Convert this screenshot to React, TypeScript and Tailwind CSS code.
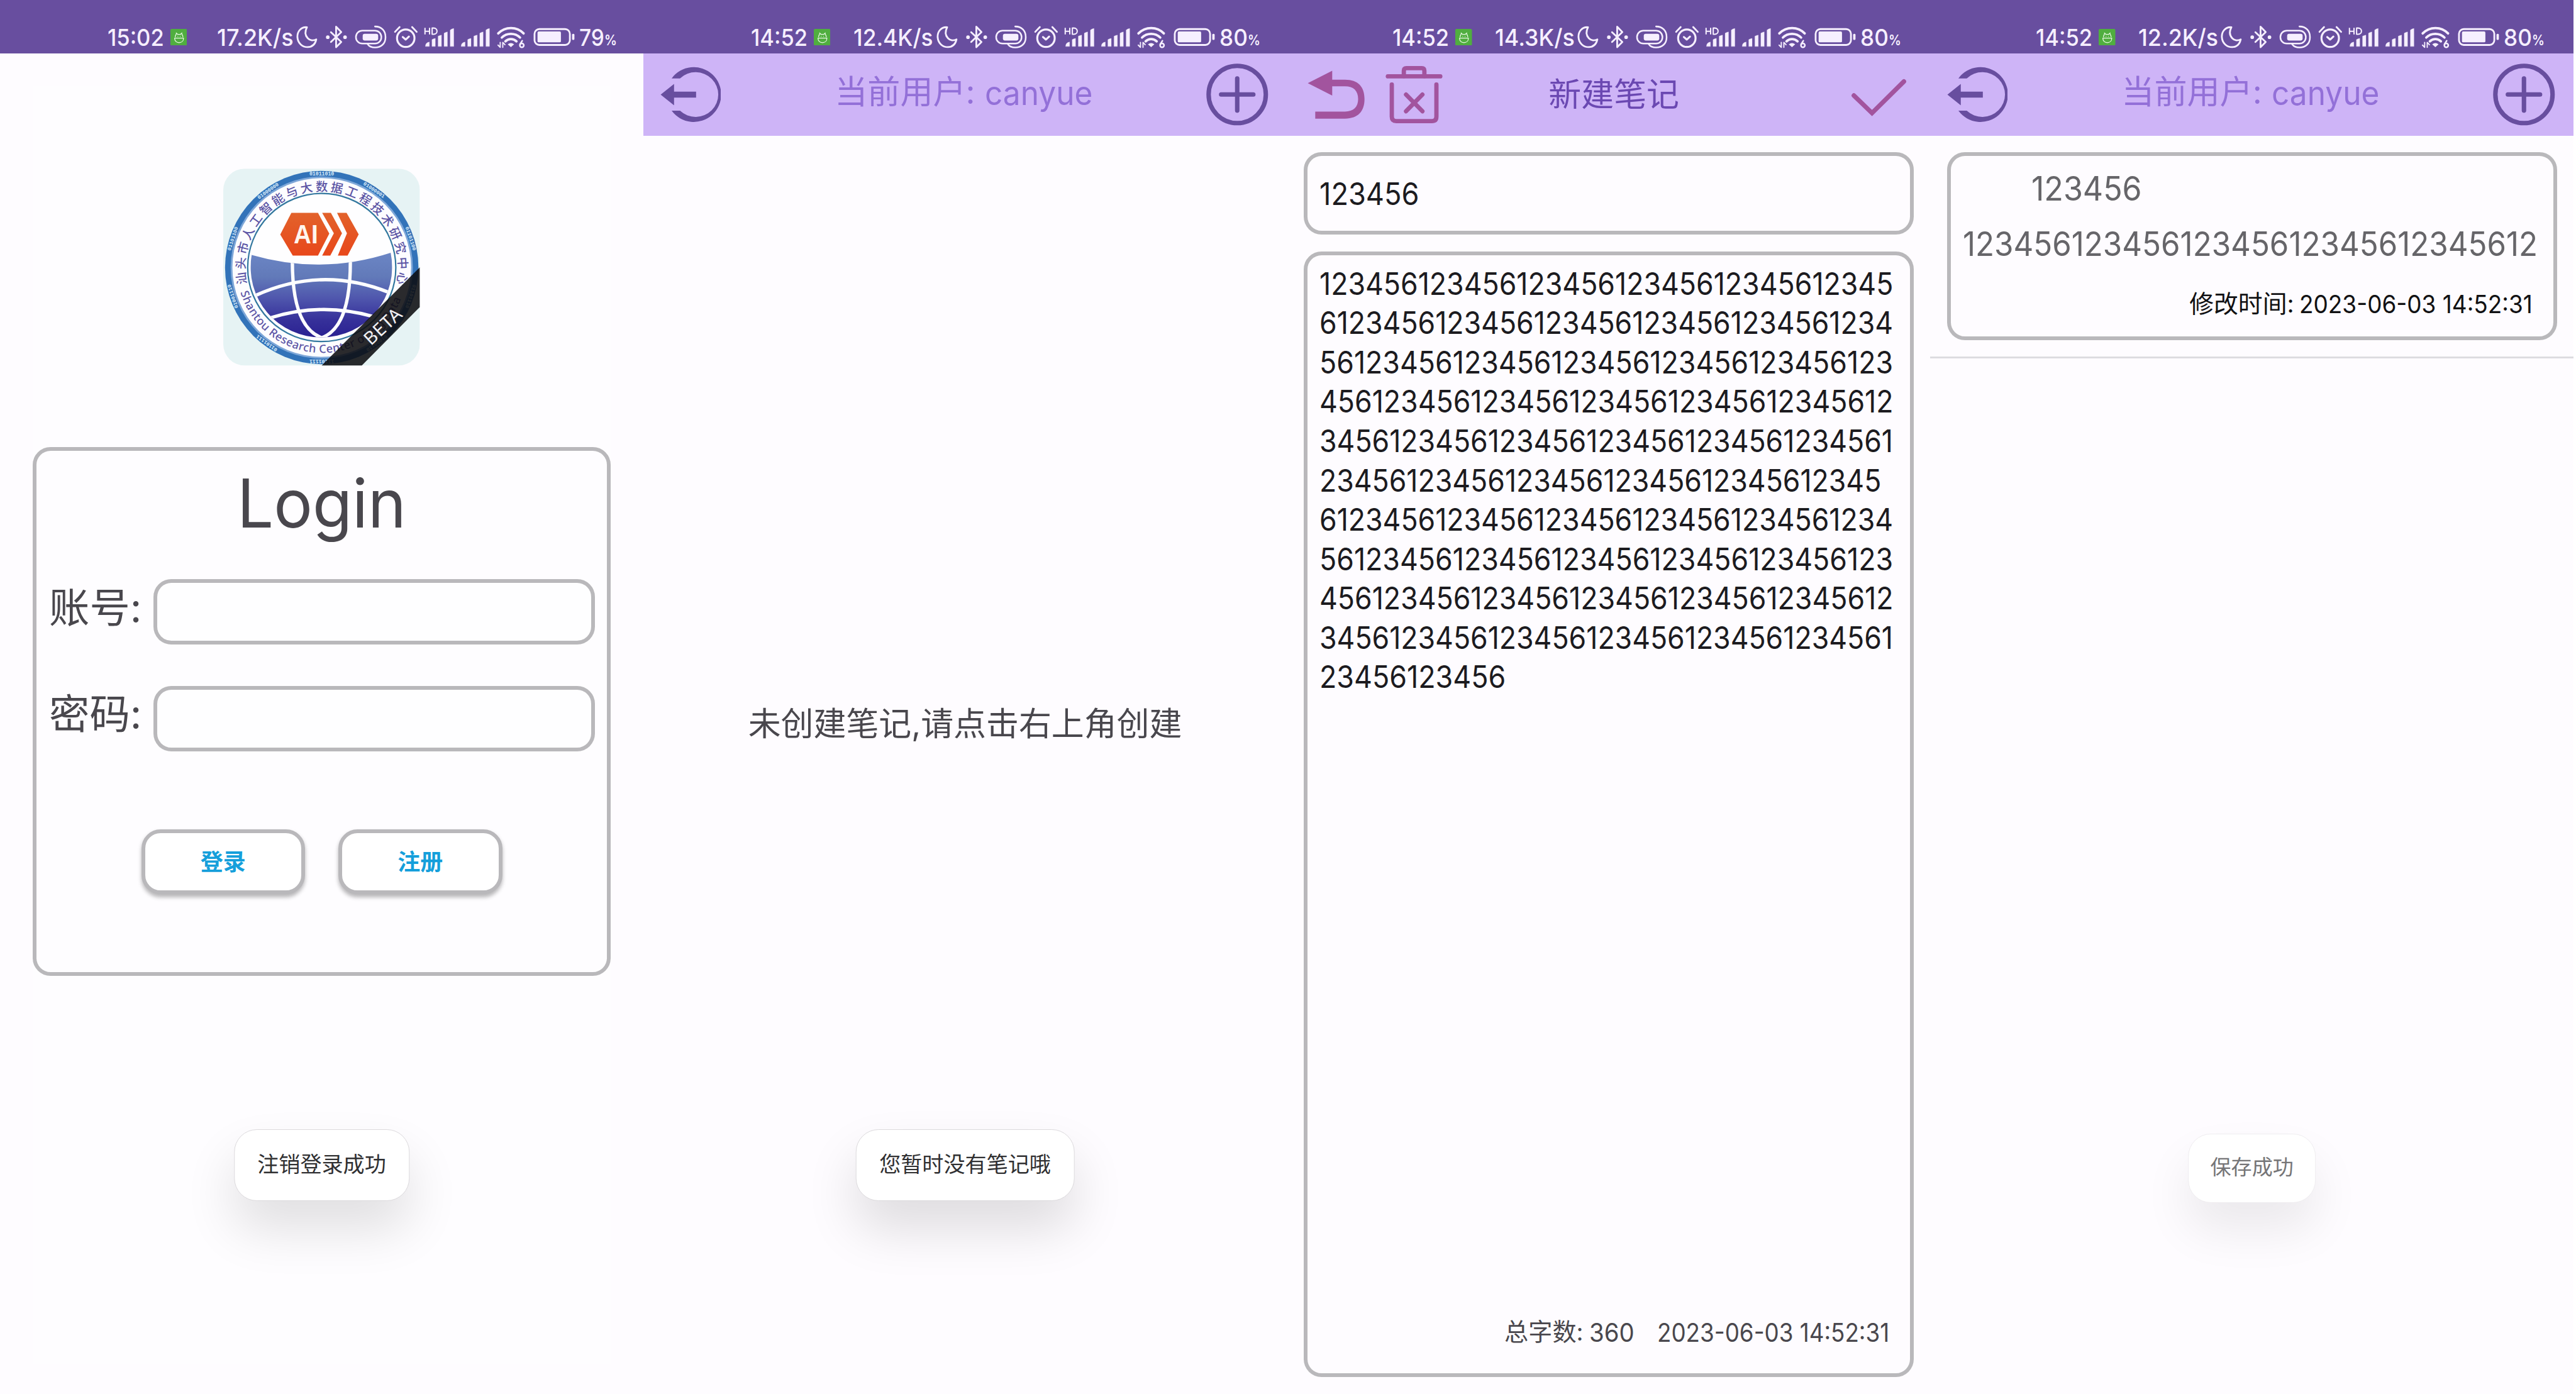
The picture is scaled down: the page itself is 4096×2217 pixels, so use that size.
import { useLayoutEffect, useRef, useState } from "react";
import type { ReactNode } from "react";

/** Horizontally condenses a single line of Latin text to the width given in `className`. */
function Fit({ className, children }: { className: string; children: ReactNode }) {
  const outer = useRef<HTMLSpanElement>(null);
  const inner = useRef<HTMLSpanElement>(null);
  const [scale, setScale] = useState(1);
  useLayoutEffect(() => {
    if (outer.current && inner.current) {
      setScale(outer.current.offsetWidth / inner.current.offsetWidth);
    }
  }, [children]);
  return (
    <span ref={outer} className={`block shrink-0 whitespace-nowrap ${className}`}>
      <span ref={inner} className="inline-block origin-left" style={{ transform: `scaleX(${scale})` }}>
        {children}
      </span>
    </span>
  );
}

function SignalBars({ x }: { x: number }) {
  return (
    <path
      transform={`translate(${x} 0)`}
      d="M0 143 Q0 124 20 121 V143 Z M33 143 V109 Q40 104 50 103 V143 Z M64 143 V92 Q72 87 81 86 V143 Z M94 143 V77 Q102 71 111 70 V143 Z M125 143 V61 Q133 54 143 53 V143 Z"
      fill="#f6efff"
    />
  );
}

function StatusIcons({ level }: { level: number }) {
  const c = "#f6efff";
  return (
    <svg viewBox="49 30 1405 132" className="h-[44px] w-[468px] shrink-0" fill="none" stroke={c} strokeLinecap="round" strokeLinejoin="round">
      <path d="M103 47 C72 44 54 70 55 96 C57 128 80 147 107 147 C130 146 145 132 150 108 C136 116 118 114 107 102 C94 88 92 68 103 47 Z" strokeWidth="9" />
      <path d="M224 72 L276 121 L250 147 V44 L276 71 L224 121" strokeWidth="9" />
      <circle cx="208" cy="97" r="9" fill={c} stroke="none" />
      <circle cx="295" cy="97" r="9" fill={c} stroke="none" />
      <rect x="350" y="64" width="128" height="65" rx="32" strokeWidth="8" />
      <rect x="384" y="80" width="78" height="34" rx="10" fill={c} stroke="none" />
      <path d="M446 43 C480 43 499 66 499 97 C499 130 476 149 446 149 C430 149 416 142 409 132" strokeWidth="8" />
      <circle cx="601" cy="102" r="44" strokeWidth="10" />
      <path d="M586 96 L601 109 L617 94" strokeWidth="10" />
      <path d="M547 70 L570 46 M656 70 L633 46" strokeWidth="9" />
      <path d="M698 50 V83 M721 50 V83 M698 67 H721 M734 51 V82 H742 C764 82 764 51 742 51 Z" strokeWidth="6.5" strokeLinecap="butt" />
      <SignalBars x={700} />
      <SignalBars x={880} />
      <path d="M1067 78 C1103 42 1160 42 1195 78" strokeWidth="12" />
      <path d="M1085 99 C1110 74 1152 74 1177 99" strokeWidth="12" />
      <path d="M1103 118 C1120 103 1142 103 1159 118" strokeWidth="12" />
      <path d="M1131 147 L1115 133 Q1131 121 1147 133 Z" fill={c} stroke="none" />
      <path d="M1077 123 V148 L1066 137 M1090 148 V123 L1101 135" strokeWidth="6" />
      <circle cx="1186" cy="138" r="10" strokeWidth="8" />
      <path d="M1177 132 L1188 115" strokeWidth="8" />
      <rect x="1250" y="56" width="178" height="80" rx="24" strokeWidth="9" />
      <rect x="1265" y="68" width={level} height="55" rx="6" fill={c} stroke="none" />
      <rect x="1439" y="80" width="12" height="31" rx="5" fill={c} stroke="none" />
    </svg>
  );
}

function StatusBar({ time, speed, battery, pad }: { time: string; speed: string; battery: string; pad: string }) {
  return (
    <div className={`flex h-[90px] shrink-0 items-center bg-[#684e9f] pt-[35px] text-[39.5px] leading-[54px] font-medium text-[#f6efff] ${pad}`}>
      <Fit className="w-[95px]">{time}</Fit>
      <svg viewBox="0 0 28 28" className="ml-[11px] h-[28px] w-[28px] shrink-0" fill="none" stroke="#e9f8e4" strokeWidth="1.3">
        <rect width="28" height="28" rx="2" fill="#50ae3f" stroke="none" />
        <path d="M8 14 C8 10 10 10 10 7 L12 9 H17 L19 7 C19 10 21 10 21 14 M7 15.500 H22 C22 20 19 23 14.500 23 C10 23 7 20 7 15.500 Z" />
        <path d="M12 12.500 H13 M16 12.500 H17" />
      </svg>
      <span className="grow" />
      <Fit className={battery === "79" ? "w-[128px]" : "w-[134px]"}>{speed}</Fit>
      <span className="w-[5px]" />
      <StatusIcons level={118} />
      <span className="w-[7px]" />
      <Fit className={battery === "79" ? "w-[42px]" : "w-[47px]"}>{battery}</Fit>
      <span className="mt-[9px]">
        <Fit className="w-[21px] text-[24px] font-semibold">%</Fit>
      </span>
    </div>
  );
}

const RING = "汕头市人工智能与大数据工程技术研究中心".split("");
const BITS: [number, string][] = [
  [0, "01011010"],
  [34, "01000001"],
  [72, "01101100"],
  [108, "01101110"],
  [144, "01000110"],
  [180, "11101111"],
  [216, "01101111"],
  [252, "01001110"],
  [288, "01101100"],
  [325, "01000000"],
];

function Logo() {
  return (
    <svg viewBox="45 38 990 992" className="h-[331px] w-[330px]">
      <defs>
        <clipPath id="tile">
          <rect x="45" y="38" width="990" height="992" rx="108" />
        </clipPath>
        <clipPath id="globe">
          <path d="M188 473 Q541 575 888 462 A354 354 0 0 1 541 888 A354 354 0 0 1 188 473 Z" />
        </clipPath>
        <linearGradient id="sea" x1="0" y1="0" x2="0" y2="1">
          <stop offset="0" stopColor="#6c87c6" />
          <stop offset="0.3" stopColor="#627ab9" />
          <stop offset="0.55" stopColor="#4f56ad" />
          <stop offset="0.8" stopColor="#36309a" />
          <stop offset="1" stopColor="#2a2191" />
        </linearGradient>
        <linearGradient id="ember" x1="0" y1="0" x2="0" y2="1">
          <stop offset="0" stopColor="#e2622b" />
          <stop offset="1" stopColor="#e8481b" />
        </linearGradient>
        <path id="rim" d="M131.700 661 A428 428 0 0 0 961 624" />
      </defs>
      <g clipPath="url(#tile)">
        <rect x="45" y="38" width="990" height="992" fill="#e6f3f4" />
        <circle cx="541" cy="536" r="487" fill="#3273b9" />
        <circle cx="541" cy="536" r="459" fill="#7ea7d8" />
        <circle cx="541" cy="536" r="450" fill="#fdfdff" />
        <circle cx="541" cy="536" r="373" fill="#fefeff" stroke="#33789f" strokeWidth="7" />
        {BITS.map(([deg, bits]) => (
          <text key={deg} transform={`rotate(${deg} 541 536)`} x="541" y="73" textAnchor="middle" fontSize="26" fill="#dcecfa" className="font-['Liberation_Mono'] font-bold">
            {bits}
          </text>
        ))}
        {RING.map((ch, i) => (
          <text key={i} transform={`rotate(${(i - 9) * 10.86} 541 536)`} x="541" y="150" textAnchor="middle" fontSize="61" fill="#5c55a5" className="font-['Noto_Sans_CJK_SC'] font-medium">
            {ch}
          </text>
        ))}
        <text fontSize="57" fill="#5c55a5" className="font-['Noto_Sans'] font-medium">
          <textPath href="#rim" textLength="1060">Shantou Research Center of Big Data</textPath>
        </text>
        <g fill="url(#ember)">
          <path d="M332 370 L388 261 H522 L579 365 L522 476 H395 Z" />
          <path d="M543 261 H587 L643 364 L584 476 H543 L602 364 Z" />
          <path d="M618 261 H666 L727 369 L671 476 H622 L668 364 Z" />
        </g>
        <text x="400" y="415" textLength="122" lengthAdjust="spacingAndGlyphs" fontSize="132" fill="#fff5ee" className="font-['Liberation_Sans'] font-bold">
          AI
        </text>
        <g clipPath="url(#globe)">
          <rect x="180" y="450" width="720" height="440" fill="url(#sea)" />
          <g fill="none" stroke="#fdfdff" strokeWidth="17">
            <path d="M393 500 C392 700 430 850 541 890 C650 850 686 700 685 500" />
            <path d="M205 678 Q541 524 885 664" />
            <path d="M285 789 Q541 709 805 784" />
          </g>
        </g>
        <path d="M1035 535 V735 L742 1030 H540 Z" fill="#0c0d10" fillOpacity="0.88" />
        <text transform="translate(848 830) rotate(-43)" x="0" y="34" textAnchor="middle" fontSize="92" letterSpacing="3" fill="#f1f1f4" className="font-['Noto_Sans']">
          BETA
        </text>
      </g>
    </svg>
  );
}

function Toast({ text, className }: { text: string; className: string }) {
  return (
    <div className={`absolute left-[540px] flex -translate-x-1/2 items-center justify-center rounded-[38px] border border-[#dcdadd] bg-white whitespace-nowrap ${className}`}>
      {text}
    </div>
  );
}

function Field({ label, className }: { label: string; className: string }) {
  return (
    <div className={`flex h-[110px] items-center pr-[20px] pl-[21px] ${className}`}>
      <span className="-mt-[13px] w-[175px] text-[68px] leading-[110px] text-[#49474d]">{label}</span>
      <div className="h-full grow rounded-[30px] border-[6.4px] border-[#b9b8bb] bg-[#fefeff]" />
    </div>
  );
}

function LoginButton({ children }: { children: string }) {
  return (
    <button className="h-[109px] w-[275px] rounded-[32px] border-[6.4px] border-[#b9b8bb] bg-white pt-[1px] text-[38px] font-bold text-[#159fdb] shadow-[0_5px_7px_rgba(0,0,0,0.28)]">
      {children}
    </button>
  );
}

function LoginScreen() {
  return (
    <section className="relative flex h-full w-[1080px] shrink-0 flex-col">
      <StatusBar time="15:02" speed="17.2K/s" battery="79" pad="pl-[180px] pr-[45px]" />
      <div className="mx-[55px] mt-[54px] flex h-[2147px] flex-col items-center bg-[#fefdff] pt-[139px]">
        <Logo />
        <div className="mt-[137px] h-[887px] w-full rounded-[30px] border-[6.4px] border-[#b9b8bb] pt-[28px]">
          <h1 className="flex justify-center text-[112.500px] leading-[120px] text-[#49474d]">
            <Fit className="w-[284px]">Login</Fit>
          </h1>
          <Field label="账号:" className="mt-[67px]" />
          <Field label="密码:" className="mt-[69px]" />
          <div className="mt-[131px] flex justify-center gap-[56px]">
            <LoginButton>登录</LoginButton>
            <LoginButton>注册</LoginButton>
          </div>
        </div>
      </div>
      <Toast text="注销登录成功" className="top-[1896px] h-[120px] w-[295px] pb-[2px] text-[36px] text-[#303032] shadow-[0_47px_85px_rgba(0,0,0,0.12)]" />
    </section>
  );
}

function HomeBar() {
  return (
    <header className="flex h-[138px] shrink-0 items-center justify-between bg-[#ceb4f7] pr-[31px] pl-[28px]">
      <svg viewBox="28 112 102 94" className="h-[94px] w-[102px] shrink-0" fill="#684e9f">
        <path d="M47 131.700 A46 46 0 1 1 47 186 H61 A38 37.500 0 1 0 61 131.700 Z" />
        <path d="M28.500 159 L51 141 V154 H88 V164 H51 V177 Z" />
      </svg>
      <h1 className="flex items-center text-[55px] leading-[80px] text-[#9370d8]">
        <span className="-mt-[7px] whitespace-nowrap">当前用户:</span>
        <span className="-mt-[4px] ml-[16px]">
          <Fit className="w-[181px]">canyue</Fit>
        </span>
      </h1>
      <svg viewBox="945 107 104 104" className="h-[104px] w-[104px] shrink-0" fill="none" stroke="#684e9f" strokeWidth="7.500" strokeLinecap="round">
        <circle cx="997" cy="159" r="48" />
        <path d="M970 159 H1024 M997 132 V186" />
      </svg>
    </header>
  );
}

function EmptyScreen() {
  return (
    <section className="relative flex h-full w-[1080px] shrink-0 flex-col">
      <StatusBar time="14:52" speed="12.4K/s" battery="80" pad="pl-[180px] pr-[45px]" />
      <HomeBar />
      <p className="mt-[948px] text-center text-[54.800px] leading-[80px] text-[#49474d]">未创建笔记,请点击右上角创建</p>
      <Toast text="您暂时没有笔记哦" className="top-[1896px] h-[120px] w-[368px] pb-[2px] text-[36px] text-[#303032] shadow-[0_47px_85px_rgba(0,0,0,0.13)]" />
    </section>
  );
}

const FULL_LINES = [
  "12345612345612345612345612345612345",
  "61234561234561234561234561234561234",
  "56123456123456123456123456123456123",
  "45612345612345612345612345612345612",
  "34561234561234561234561234561234561",
];

function EditorScreen() {
  return (
    <section className="flex h-full w-[1080px] shrink-0 flex-col">
      <StatusBar time="14:52" speed="14.3K/s" battery="80" pad="pl-[177px] pr-[49px]" />
      <header className="flex h-[138px] shrink-0 items-center justify-between bg-[#ceb4f7] pr-[39px] pl-[35px]">
        <div className="flex items-center gap-[35px]">
          <svg viewBox="35 111 96 97" className="h-[97px] w-[96px]" fill="#a2549e">
            <path d="M35.500 139.700 L76.500 119 V134 H98 C120 134 130.700 146 130.700 166.500 C130.700 187 120 199.300 98 199.300 H48 V187.500 H98 C112 187.500 120 180 120 166.500 C120 152 112 145 98 145 H76.500 V160.700 Z" />
          </svg>
          <svg viewBox="166 111 96 97" className="h-[97px] w-[96px]" fill="none" stroke="#a2549e" strokeWidth="7.200" strokeLinecap="round">
            <path d="M170 128.300 H258" />
            <path d="M196.800 128 V119 Q196.800 114.600 201 114.600 H227 Q231.300 114.600 231.300 119 V128" />
            <path d="M176.600 142 V196 Q176.600 203.500 184 203.500 H244 Q251.500 203.500 251.500 196 V142" />
            <path d="M200.500 159 L228 187 M228 159 L200.500 187" />
          </svg>
        </div>
        <h1 className="mt-[1px] -ml-[111px] text-[54.800px] leading-[80px] text-[#6b48b2]">新建笔记</h1>
        <svg viewBox="947 111 94 97" className="h-[97px] w-[94px]" fill="none" stroke="#a2549e" strokeWidth="7.600" strokeLinecap="round">
          <path d="M952 160.500 L982.500 190 L1036 137" />
        </svg>
      </header>
      <div className="mx-[28px] mt-[28px] flex h-[138px] shrink-0 items-center rounded-[30px] border-[6.4px] border-[#b9b8bb] pl-[20px] text-[52px] leading-[66px] text-[#1c1b1f]">
        <Fit className="w-[167px]">123456</Fit>
      </div>
      <div className="mx-[28px] mt-[28px] flex h-[1890px] shrink-0 flex-col rounded-[30px] border-[6.4px] border-[#b9b8bb] pt-[15px] pl-[20px] text-[52px] leading-[66px] text-[#1c1b1f]">
        {FULL_LINES.map((line) => (
          <Fit key={line} className="w-[963px]">{line}</Fit>
        ))}
        <Fit className="w-[943px]">2345612345612345612345612345612345</Fit>
        {FULL_LINES.slice(1).map((line) => (
          <Fit key={line} className="w-[963px]">{line}</Fit>
        ))}
        <Fit className="w-[313px]">23456123456</Fit>
        <div className="mt-auto mb-[34px] flex items-center justify-end pr-[34px] text-[42.600px] text-[#49474d]">
          <span className="-mt-[4px] text-[40.300px]">总字数:</span>
          <span className="w-[10px]" />
          <Fit className="w-[76px]">360</Fit>
          <span className="w-[38px]" />
          <Fit className="w-[390px]">2023-06-03 14:52:31</Fit>
        </div>
      </div>
    </section>
  );
}

function ListScreen() {
  return (
    <section className="relative flex h-full w-[1080px] shrink-0 flex-col">
      <StatusBar time="14:52" speed="12.2K/s" battery="80" pad="pl-[177px] pr-[49px]" />
      <HomeBar />
      <div className="mx-[28px] mt-[28px] flex h-[315px] shrink-0 flex-col rounded-[30px] border-[6.4px] border-[#b9b8bb] text-[56px] text-[#666569]">
        <div className="mt-[15px] pl-[136px] leading-[80px]">
          <Fit className="w-[185px]">123456</Fit>
        </div>
        <div className="mt-[13px] pl-[20px] leading-[80px]">
          <Fit className="w-[965px]">12345612345612345612345612345612</Fit>
        </div>
        <div className="mt-[30px] flex items-center justify-end pr-[35px] text-[42.300px] leading-[62px] text-[#111113]">
          <span className="-mt-[2px] text-[41px]">修改时间:</span>
          <span className="w-[9px]" />
          <Fit className="w-[391px]">2023-06-03 14:52:31</Fit>
        </div>
      </div>
      <div className="mt-[28px] h-[3px] shrink-0 bg-[#dddce0]" />
      <Toast text="保存成功" className="top-[1903px] h-[116px] w-[215px] border-[#efedf0] pb-[1px] text-[34.900px] text-[#757577] shadow-[0_45px_80px_rgba(0,0,0,0.08)]" />
    </section>
  );
}

export default function App() {
  return (
    <main className="h-[2217px] w-[4096px] overflow-hidden bg-white">
      <div className="flex h-[2341px] w-[4320px] bg-[#fefcff] [zoom:0.94728] font-[Inter,'Noto_Sans_CJK_SC',sans-serif]">
        <LoginScreen />
        <EmptyScreen />
        <EditorScreen />
        <ListScreen />
      </div>
    </main>
  );
}
